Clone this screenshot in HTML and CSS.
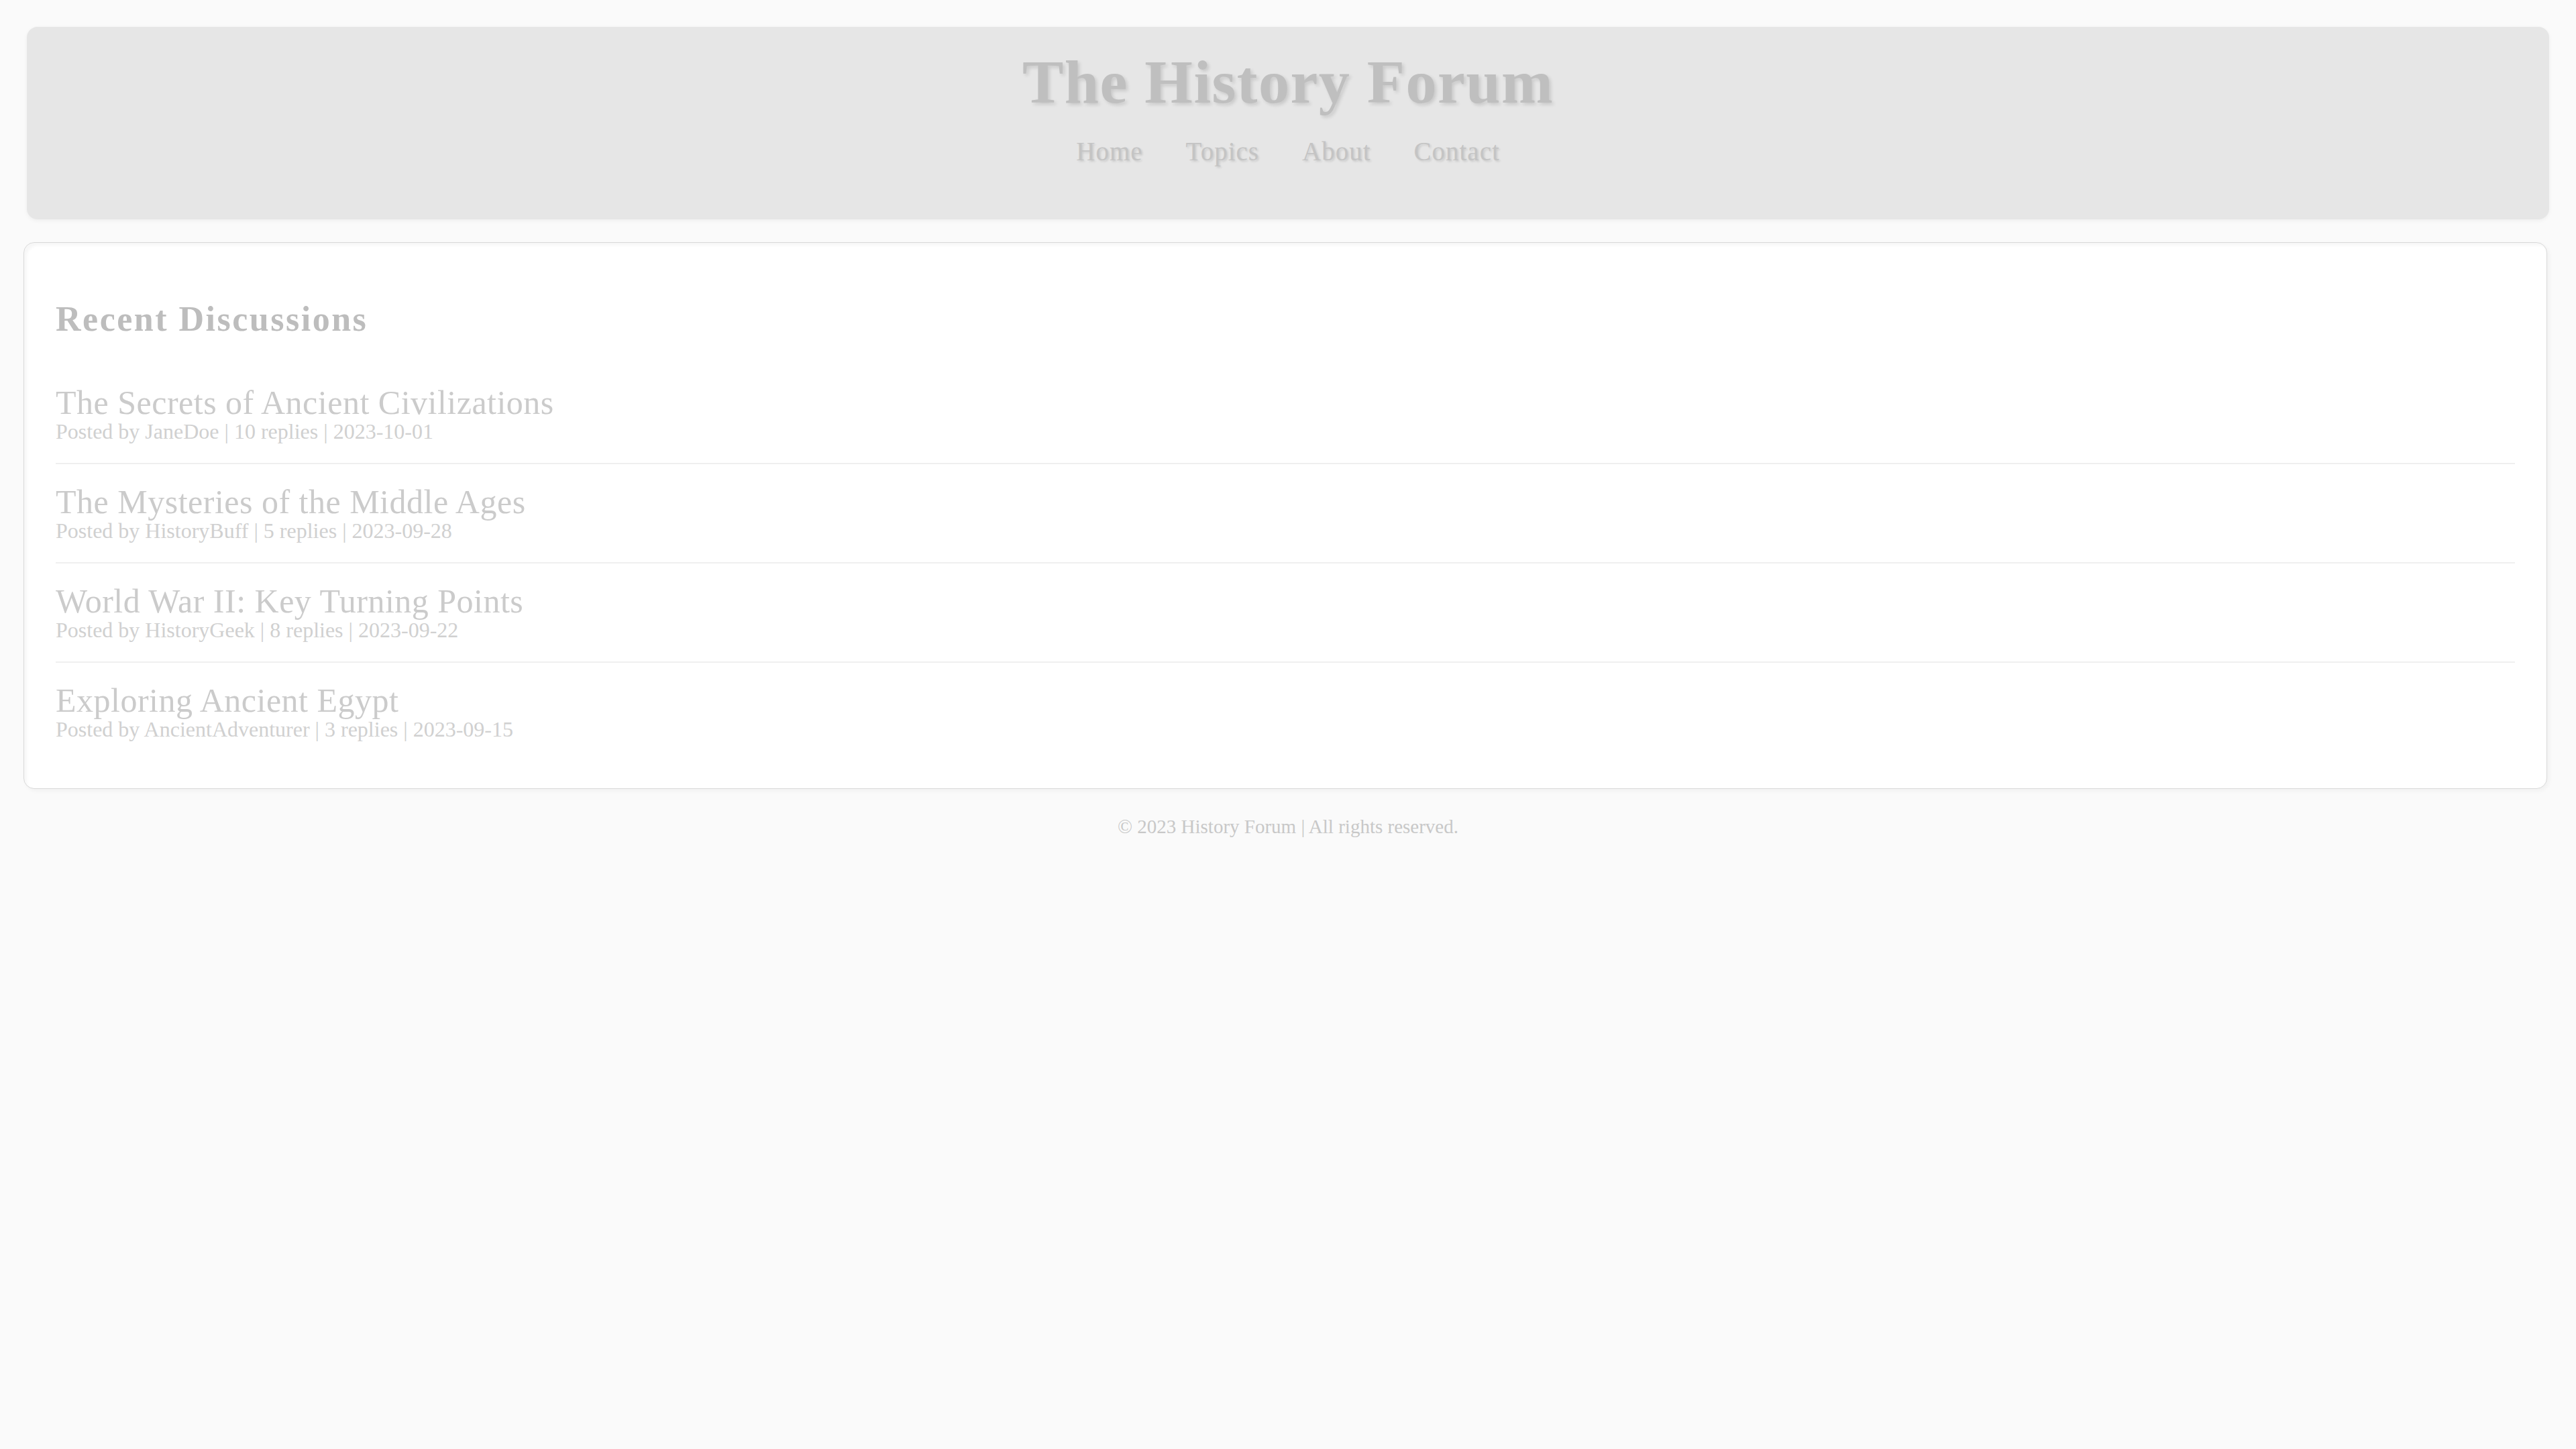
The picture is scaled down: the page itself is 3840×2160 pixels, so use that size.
FILE: index.html
```html
<!DOCTYPE html>
<html lang="en">
<head>
<meta charset="utf-8">
<title>The History Forum</title>
<link rel="stylesheet" href="styles.css">
</head>
<body>
<div class="page">
  <header class="site-header">
    <h1 class="site-title">The History Forum</h1>
    <nav class="nav">
      <a href="#">Home</a>
      <a href="#">Topics</a>
      <a href="#">About</a>
      <a href="#">Contact</a>
    </nav>
  </header>
  <main class="card">
    <h2 class="section-title">Recent Discussions</h2>
    <div class="topic">
      <div class="topic-title">The Secrets of Ancient Civilizations</div>
      <div class="topic-meta">Posted by JaneDoe | 10 replies | 2023-10-01</div>
    </div>
    <div class="topic">
      <div class="topic-title">The Mysteries of the Middle Ages</div>
      <div class="topic-meta">Posted by HistoryBuff | 5 replies | 2023-09-28</div>
    </div>
    <div class="topic">
      <div class="topic-title">World War II: Key Turning Points</div>
      <div class="topic-meta">Posted by HistoryGeek | 8 replies | 2023-09-22</div>
    </div>
    <div class="topic">
      <div class="topic-title">Exploring Ancient Egypt</div>
      <div class="topic-meta">Posted by AncientAdventurer | 3 replies | 2023-09-15</div>
    </div>
  </main>
  <footer class="footer">© 2023 History Forum | All rights reserved.</footer>
</div>
</body>
</html>
```

FILE: styles.css
```css
html, body {
  margin: 0;
  padding: 0;
  background: #fafafa;
}
body {
  font-family: "Liberation Serif", "Times New Roman", serif;
  color: #c8c8c8;
}
.page {
  padding: 40px 40px 40px 40px;
}
.site-header {
  background: #e6e6e6;
  border-radius: 16px;
  box-shadow: 0 2px 6px rgba(0, 0, 0, 0.05);
  padding: 32px 0 77px;
  text-align: center;
}
.site-title {
  margin: 0;
  font-size: 92px;
  line-height: 100px;
  font-weight: bold;
  letter-spacing: 1.5px;
  color: #bfbfbf;
  text-shadow: 3px 3px 5px rgba(0, 0, 0, 0.13);
}
.nav {
  margin-top: 30px;
  display: flex;
  justify-content: center;
  gap: 64px;
  line-height: 48px;
}
.nav a {
  font-size: 39px;
  letter-spacing: 1px;
  color: #c4c4c4;
  text-decoration: none;
  text-shadow: 2px 2px 3px rgba(0, 0, 0, 0.12);
}
.card {
  display: block;
  margin: 34px 3px 0 -5px;
  background: #ffffff;
  border: 1px solid #d9d9d9;
  border-radius: 16px;
  box-shadow: inset 5px 5px 4px -1px rgba(0, 0, 0, 0.035), 3px 3px 6px rgba(0, 0, 0, 0.04);
  padding: 84px 47px 41px;
}
.section-title {
  margin: 0 0 38px;
  font-size: 52px;
  line-height: 60px;
  font-weight: bold;
  letter-spacing: 2.5px;
  color: #bdbdbd;
}
.topic {
  padding: 31px 0 29px;
  border-bottom: 2px solid #efefef;
}
.topic:last-child {
  border-bottom: none;
}
.topic-title {
  font-size: 50px;
  line-height: 50px;
  letter-spacing: 0.5px;
  color: #cbcbcb;
}
.topic-meta {
  font-size: 32px;
  line-height: 36px;
  color: #d0d0d0;
}
.footer {
  margin-top: 38px;
  text-align: center;
  font-size: 29px;
  line-height: 36px;
  color: #c8c8c8;
}
```
